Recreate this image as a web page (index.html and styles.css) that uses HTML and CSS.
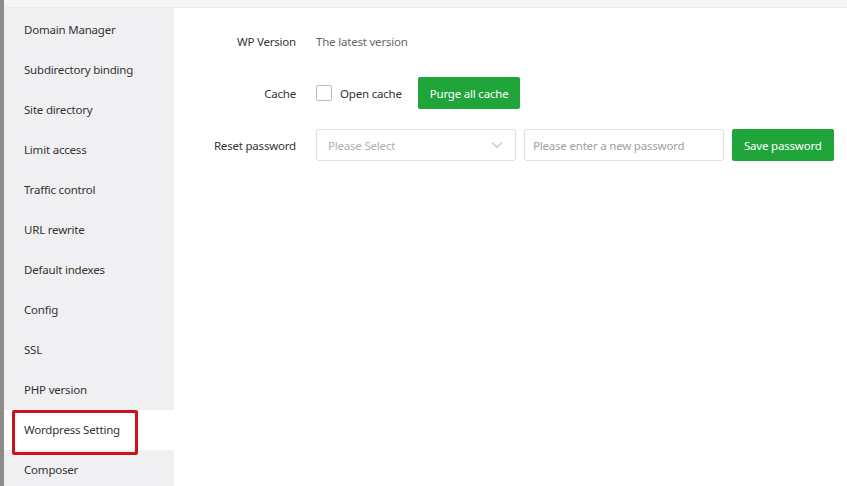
FILE: index.html
```html
<!DOCTYPE html>
<html lang="en">
<head>
<meta charset="utf-8">
<title>Wordpress Setting</title>
<link rel="stylesheet" href="styles.css">
</head>
<body>
<div class="screen">
  <div class="backdrop-edge"></div>
  <div class="panel">
    <div class="topband"></div>
    <div class="main">
      <ul class="sidebar">
        <li class="nav-item">Domain Manager</li>
        <li class="nav-item">Subdirectory binding</li>
        <li class="nav-item">Site directory</li>
        <li class="nav-item">Limit access</li>
        <li class="nav-item">Traffic control</li>
        <li class="nav-item">URL rewrite</li>
        <li class="nav-item">Default indexes</li>
        <li class="nav-item">Config</li>
        <li class="nav-item">SSL</li>
        <li class="nav-item">PHP version</li>
        <li class="nav-item active">Wordpress Setting</li>
        <li class="nav-item">Composer</li>
      </ul>
      <div class="content">
        <div class="form-row">
          <div class="label">WP Version</div>
          <div class="field text-value">The latest version</div>
        </div>
        <div class="form-row">
          <div class="label">Cache</div>
          <div class="field">
            <label class="check"><span class="box"></span><span>Open cache</span></label>
            <button class="btn">Purge all cache</button>
          </div>
        </div>
        <div class="form-row">
          <div class="label">Reset password</div>
          <div class="field">
            <div class="select">
              <span class="placeholder">Please Select</span>
              <svg class="chevron" width="12" height="8" viewBox="0 0 12 8"><path d="M1 1.5 L6 6.5 L11 1.5" fill="none" stroke="#c0c4cc" stroke-width="1.2"/></svg>
            </div>
            <input class="input" type="text" placeholder="Please enter a new password">
            <button class="btn">Save password</button>
          </div>
        </div>
      </div>
    </div>
  </div>
</div>
</body>
</html>
```

FILE: styles.css
```css
* { box-sizing: border-box; }
html, body { margin: 0; padding: 0; }
body {
  font-family: "Noto Sans", "Open Sans", Arial, sans-serif;
  font-size: 11.5px;
  letter-spacing: -0.2px;
  color: #333;
  background: #fff;
}
.screen {
  display: flex;
  width: 847px;
  height: 486px;
  overflow: hidden;
}
.backdrop-edge {
  width: 4px;
  flex: none;
  background: #8c8c8c;
}
.panel {
  flex: 1;
  display: flex;
  flex-direction: column;
  background: #fff;
}
.topband {
  height: 8px;
  flex: none;
  background: #f6f6f6;
  border-bottom: 1px solid #ededed;
}
.main {
  flex: 1;
  display: flex;
}
.sidebar {
  list-style: none;
  margin: 0;
  padding: 2px 0 0;
  width: 170px;
  flex: none;
  background: #f0f0f2;
}
.nav-item {
  position: relative;
  height: 40px;
  line-height: 40px;
  padding-left: 20px;
  color: #333;
  white-space: nowrap;
}
.nav-item.active {
  background: #fff;
}
.nav-item.active::after {
  content: "";
  position: absolute;
  left: 8px;
  top: 0;
  width: 120px;
  height: 39px;
  border: 3px solid #cc1119;
  border-radius: 2px;
}
.content {
  flex: 1;
  padding-top: 17px;
}
.form-row {
  display: flex;
  align-items: center;
  height: 32px;
  margin-bottom: 20px;
}
.label {
  width: 122px;
  text-align: right;
  color: #333;
  flex: none;
}
.field {
  margin-left: 20px;
  display: flex;
  align-items: center;
}
.text-value { color: #666; }
.check {
  display: flex;
  align-items: center;
  color: #333;
}
.box {
  width: 16px;
  height: 16px;
  border: 1px solid #bbb;
  border-radius: 2px;
  background: #fff;
  margin-right: 8px;
}
.btn {
  font: inherit;
  letter-spacing: inherit;
  height: 32px;
  padding: 0 12px;
  border: none;
  border-radius: 2px;
  background: #20a53a;
  color: #fff;
  margin-left: 16px;
}
.select {
  width: 200px;
  height: 32px;
  border: 1px solid #dcdfe6;
  border-radius: 3px;
  display: flex;
  align-items: center;
  justify-content: space-between;
  padding: 0 12px 0 11px;
}
.placeholder { color: #b0b0b0; }
.input {
  font: inherit;
  letter-spacing: inherit;
  width: 200px;
  height: 32px;
  margin-left: 8px;
  border: 1px solid #dcdfe6;
  border-radius: 3px;
  padding: 0 8px;
  color: #333;
  outline: none;
}
.input::placeholder { color: #a0a0a0; }
.field .input + .btn { margin-left: 8px; }
```
